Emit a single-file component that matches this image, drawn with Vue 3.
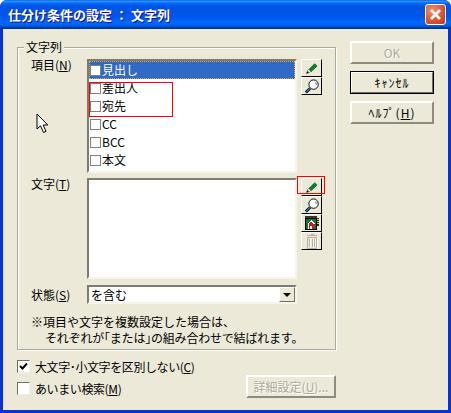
<script setup>
const items = ['見出し', '差出人', '宛先', 'CC', 'BCC', '本文']
</script>

<template>
  <div class="window">
    <header class="title">
      <span class="caption">仕分け条件の設定 ： 文字列</span>
      <span class="close">
        <svg width="13" height="13" viewBox="0 0 13 13">
          <path d="M2 2 L11 11 M11 2 L2 11" stroke="#fff" stroke-width="2.6" fill="none" />
        </svg>
      </span>
    </header>

    <main class="client">
      <div class="left">
        <section class="group">
          <span class="legend">文字列</span>

          <div class="row">
            <span class="label">項目(<u>N</u>)</span>
            <div class="sunken list">
              <div v-for="(item, i) in items" :key="item" class="item" :class="{ selected: i === 0 }">
                <span class="box" />
                <span>{{ item }}</span>
              </div>
            </div>
            <div class="tools">
              <button class="tool">
                <svg width="13" height="13" viewBox="0 0 16 16"><path d="M1.5 14.5 L2.5 11 L5 13.5 Z" fill="#000" /><path d="M2.8 10.8 L4.5 9 L7 11.5 L5.2 13.2 Z" fill="#fff" stroke="#000" stroke-width=".5" /><path d="M4.5 9 L12 1.5 L14.8 4.2 L7 11.8 Z" fill="#0a7a26" /><path d="M7 11.8 L14.8 4.2 L15 5.2 L7.6 12.4 Z" fill="#00330a" /></svg>
              </button>
              <button class="tool">
                <svg width="15" height="15" viewBox="0 0 16 16"><path d="M2 14.5 L6.5 10" stroke="#000" stroke-width="3" /><path d="M2.4 14 L6.4 10" stroke="#2a86e0" stroke-width="1.4" /><circle cx="10.2" cy="6" r="5" fill="#fff" stroke="#000" stroke-width="1" /><path d="M12.6 3.6 L13 6.4" stroke="#3a5ee0" stroke-width="1" /></svg>
              </button>
            </div>
          </div>

          <div class="row second">
            <span class="label">文字(<u>T</u>)</span>
            <div class="sunken memo" />
            <div class="tools">
              <button class="tool">
                <svg width="13" height="13" viewBox="0 0 16 16"><path d="M1.5 14.5 L2.5 11 L5 13.5 Z" fill="#000" /><path d="M2.8 10.8 L4.5 9 L7 11.5 L5.2 13.2 Z" fill="#fff" stroke="#000" stroke-width=".5" /><path d="M4.5 9 L12 1.5 L14.8 4.2 L7 11.8 Z" fill="#0a7a26" /><path d="M7 11.8 L14.8 4.2 L15 5.2 L7.6 12.4 Z" fill="#00330a" /></svg>
              </button>
              <button class="tool">
                <svg width="15" height="15" viewBox="0 0 16 16"><path d="M2 14.5 L6.5 10" stroke="#000" stroke-width="3" /><path d="M2.4 14 L6.4 10" stroke="#2a86e0" stroke-width="1.4" /><circle cx="10.2" cy="6" r="5" fill="#fff" stroke="#000" stroke-width="1" /><path d="M12.6 3.6 L13 6.4" stroke="#3a5ee0" stroke-width="1" /></svg>
              </button>
              <button class="tool">
                <svg width="16" height="16" viewBox="0 0 16 16" shape-rendering="crispEdges"><rect x="1" y="1" width="12" height="2" fill="#333" /><rect x="1" y="3" width="12" height="12" fill="#000" /><rect x="2" y="4" width="10" height="10" fill="#0c7a34" /><path d="M7 5 L11 9 H10 V14 H4 V9 H3 Z" fill="#fff" /><path d="M7 6.5 L9.5 9 V14 H4.5 V9 Z" fill="#e0101a" /><rect x="6" y="11" width="2" height="3" fill="#fff" /><rect x="13" y="3" width="2" height="8" fill="#222" /><rect x="13" y="4" width="2" height="1" fill="#e8d820" /><rect x="13" y="6" width="2" height="1" fill="#e8d820" /><rect x="13" y="8" width="2" height="1" fill="#e8d820" /></svg>
              </button>
              <button class="tool">
                <svg width="16" height="16" viewBox="0 0 16 16" fill="none" shape-rendering="crispEdges"><path d="M3 2.5 H13 M6.5 1.5 H9.5 M3.5 4.5 H12.5 V15.5 H3.5 Z M5.5 6 V14 M8 6 V14 M10.5 6 V14" stroke="#b5b2a4" /><path d="M13.5 5 V16 M6.5 6 V14 M9 6 V14 M11.5 6 V14" stroke="#fff" /></svg>
              </button>
            </div>
          </div>

          <div class="row third">
            <span class="label">状態(<u>S</u>)</span>
            <div class="sunken combo">
              <span class="combo-text">を含む</span>
              <span class="arrow"><i /></span>
            </div>
          </div>

          <p class="note">※項目や文字を複数設定した場合は、<br /><span class="indent">それぞれが｢または｣の組み合わせで結ばれます。</span></p>
        </section>

        <div class="bottom">
          <div class="checks">
            <label class="check">
              <span class="checkbox">
                <svg width="11" height="11" viewBox="0 0 11 11"><path d="M2 5 L4.5 7.5 L9 2.5" stroke="#000" stroke-width="2" fill="none" /></svg>
              </span>
              <span class="check-text">大文字･小文字を区別しない(<u>C</u>)</span>
            </label>
            <label class="check">
              <span class="checkbox" />
              <span class="check-text">あいまい検索(<u>M</u>)</span>
            </label>
          </div>
          <button class="push details" disabled>詳細設定(<u>U</u>)...</button>
        </div>
      </div>

      <div class="actions">
        <button class="push" disabled>OK</button>
        <button class="push default kana">ｷｬﾝｾﾙ</button>
        <button class="push kana">ﾍﾙﾌﾟ(<u>H</u>)</button>
      </div>
    </main>

    <span class="mark mark-list" />
    <span class="mark mark-tool" />
    <svg class="cursor" width="13" height="21" viewBox="0 0 13 21">
      <path d="M1 1 V16 L4.5 12.8 L7.5 19.5 L10 18.4 L7.2 12 H11.8 Z" fill="#fff" stroke="#000" stroke-width="1" />
    </svg>
  </div>
</template>

<style>
body {
  background: #fff;
}
</style>

<style scoped>
.window {
  position: relative;
  box-sizing: border-box;
  width: 451px;
  height: 413px;
  display: flex;
  flex-direction: column;
  border-radius: 7px 7px 0 0;
  overflow: hidden;
  background: #0831d9;
  font-family: "Noto Sans CJK JP", "Liberation Sans", sans-serif;
  font-size: 12px;
  color: #000;
}

.title {
  height: 29px;
  flex: none;
  display: flex;
  align-items: center;
  justify-content: space-between;
  padding: 0 5px 0 8px;
  background: linear-gradient(180deg, #0058ee 0, #3593ff 4%, #288eff 6%, #127dff 8%, #036ffc 10%, #0262ee 14%, #0057e5 20%, #0054e3 24%, #0055eb 56%, #005bf5 66%, #026afe 76%, #0062ef 86%, #0052d6 92%, #0040ab 94%, #003092 100%);
}

.caption {
  color: #fff;
  font-size: 13px;
  font-weight: 700;
  text-shadow: 1px 1px 0 #0f1089;
}

.close {
  width: 21px;
  height: 21px;
  box-sizing: border-box;
  display: flex;
  align-items: center;
  justify-content: center;
  border: 1px solid #fff;
  border-radius: 3px;
  background: radial-gradient(circle at 35% 30%, #f0927a, #d9512c 60%, #c23a14);
}

.client {
  flex: 1;
  display: flex;
  gap: 14px;
  margin: 0 3px 3px;
  padding: 12px 0 0 14px;
  background: #ece9d8;
}

.left {
  width: 319px;
}

.group {
  position: relative;
  box-sizing: border-box;
  height: 303px;
  margin-top: 6px;
  padding: 11px 0 0 13px;
  border: 1px solid #aca899;
  box-shadow: 1px 1px 0 #fff, inset 1px 1px 0 #fff;
}

.legend {
  position: absolute;
  left: 6px;
  top: -8px;
  padding: 0 2px;
  line-height: 14px;
  background: #ece9d8;
}

.row {
  display: grid;
  grid-template-columns: 56px 210px 21px;
  column-gap: 0;
}

.row .tools {
  margin-left: 4px;
}

.row.second {
  margin-top: 5px;
}

.row.third {
  margin-top: 6px;
  align-items: center;
}

.label {
  line-height: 12px;
}

.sunken {
  box-sizing: border-box;
  border: 2px solid;
  border-color: #7f7c6f #f7f5ea #f7f5ea #7f7c6f;
  background: #fff;
}

.list {
  height: 114px;
}

.item {
  height: 18px;
  display: flex;
  align-items: center;
  gap: 1px;
  padding-left: 1px;
  line-height: 18px;
}

.item.selected {
  background: #316ac5;
  color: #fff;
  outline: 1px dotted #e8a33c;
  outline-offset: -1px;
}

.box {
  box-sizing: border-box;
  width: 11px;
  height: 11px;
  border: 1px solid #808080;
  background: #fff;
}

.memo {
  height: 101px;
}

.tools {
  display: flex;
  flex-direction: column;
  width: 21px;
}

.tool {
  box-sizing: border-box;
  width: 21px;
  height: 18px;
  padding: 0;
  display: flex;
  align-items: center;
  justify-content: center;
  border: 1px solid;
  border-color: #fff #000 #000 #fff;
  background: #ece9d8;
}

.combo {
  position: relative;
  height: 19px;
  display: flex;
  align-items: center;
  justify-content: space-between;
}

.combo-text {
  padding-left: 2px;
}

.arrow {
  box-sizing: border-box;
  width: 16px;
  height: 15px;
  display: flex;
  align-items: center;
  justify-content: center;
  border: 1px solid;
  border-color: #fff #716f64 #716f64 #fff;
  background: #ece9d8;
}

.arrow i {
  width: 0;
  height: 0;
  border-style: solid;
  border-width: 4px 4px 0;
  border-color: #000 transparent transparent;
}

.note {
  margin: 10px 0 0;
  line-height: 16px;
  white-space: nowrap;
}

.indent {
  padding-left: 14px;
  letter-spacing: -.2px;
}

.bottom {
  display: flex;
  justify-content: space-between;
  align-items: flex-end;
  margin-top: 10px;
}

.checks {
  display: flex;
  flex-direction: column;
  gap: 9px;
  padding-bottom: 3px;
}

.check {
  display: flex;
  align-items: center;
  gap: 5px;
  height: 13px;
  white-space: nowrap;
}

.check-text {
  letter-spacing: -.4px;
}

.checkbox {
  box-sizing: border-box;
  width: 13px;
  height: 13px;
  display: flex;
  align-items: center;
  justify-content: center;
  border: 1px solid;
  border-color: #716f64 #f1efe2 #f1efe2 #716f64;
  background: #fff;
}

.actions {
  display: flex;
  flex-direction: column;
  gap: 7px;
  width: 84px;
}

.push {
  box-sizing: border-box;
  width: 84px;
  height: 23px;
  padding: 0;
  border: 2px solid;
  border-color: #fff #8d8b7f #8d8b7f #fff;
  background: #ece9d8;
  color: #000;
  font: inherit;
  line-height: 17px;
}

.push.kana {
  letter-spacing: 1px;
}

.push:disabled {
  color: #aca899;
  text-shadow: 1px 1px 0 #fff;
}

.push.default {
  outline: 1px solid #000;
  outline-offset: -1px;
  border-color: #fff #716f64 #716f64 #fff;
}

.details {
  width: 90px;
}

.mark {
  position: absolute;
  box-sizing: border-box;
  border: 1px solid #f00;
}

.mark-list {
  left: 89px;
  top: 82px;
  width: 84px;
  height: 35px;
}

.mark-tool {
  left: 297px;
  top: 176px;
  width: 28px;
  height: 18px;
}

.cursor {
  position: absolute;
  left: 36px;
  top: 113px;
}
</style>
